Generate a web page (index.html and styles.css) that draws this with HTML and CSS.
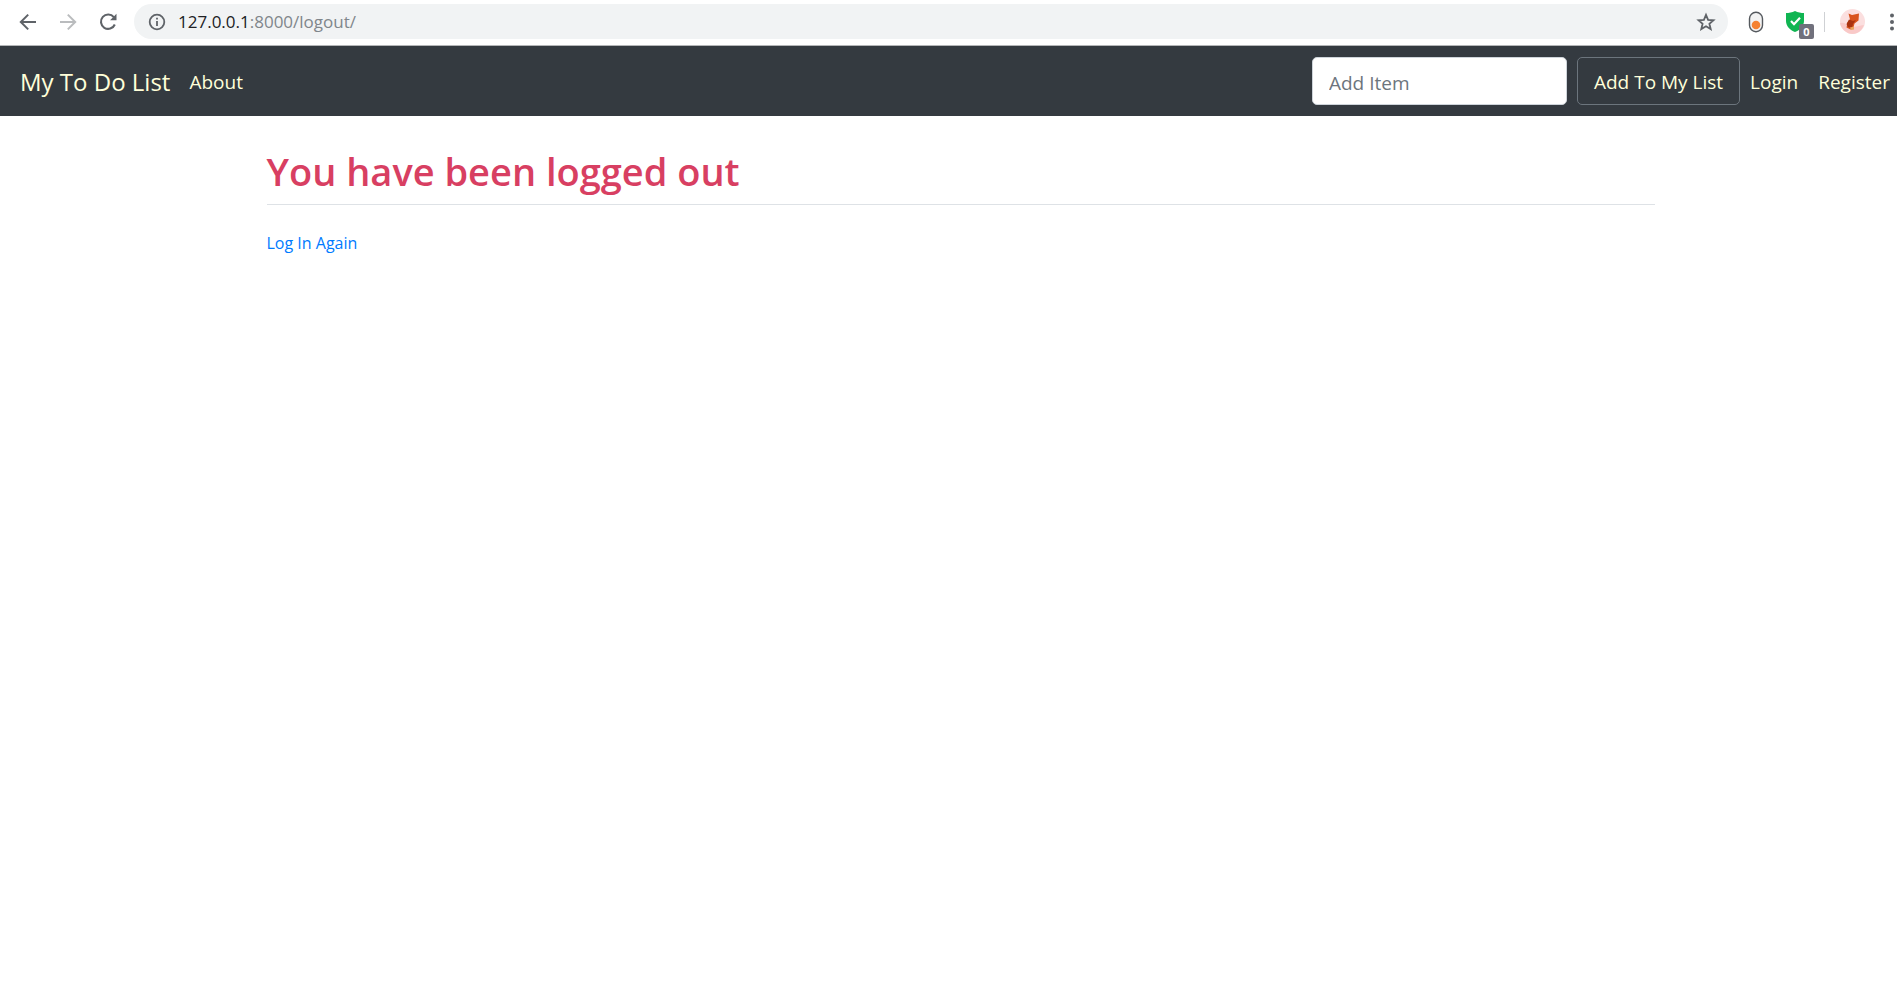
FILE: index.html
```html
<!DOCTYPE html>
<html lang="en">
<head>
<meta charset="utf-8">
<title>My To Do List</title>
<link rel="stylesheet" href="styles.css">
</head>
<body>
<div class="toolbar">
  <div class="history">
    <button class="icon-button" aria-label="Back"><svg width="18" height="18" viewBox="0 0 18 18" fill="none" stroke="#5f6368" stroke-width="2"><path d="M17 9H2.400M9.200 1.600 1.800 9l7.400 7.400"/></svg></button>
    <button class="icon-button" aria-label="Forward"><svg width="18" height="18" viewBox="0 0 18 18" fill="none" stroke="#babcbe" stroke-width="2"><path d="M1 9h14.600M8.800 1.600 16.200 9l-7.400 7.400"/></svg></button>
    <button class="icon-button" aria-label="Reload"><svg width="18" height="18" viewBox="0 0 18 18"><path d="M14.800 4.200A7.200 7.200 0 1 0 15.800 11.500" fill="none" stroke="#5f6368" stroke-width="2.100"/><path d="M17.500.8v6.400h-6.400z" fill="#5f6368"/></svg></button>
  </div>
  <div class="address">
    <svg width="18" height="18" viewBox="0 0 18 18"><circle cx="9" cy="9" r="7.300" fill="none" stroke="#5f6368" stroke-width="1.800"/><path d="M8.100 4.700h1.800v1.800H8.100zM8.100 8h1.800v5H8.100z" fill="#5f6368"/></svg>
    <span class="url"><span class="host">127.0.0.1</span>:8000/logout/</span>
    <button class="icon-button" aria-label="Bookmark"><svg width="20" height="20" viewBox="0 0 20 20" fill="none" stroke="#5f6368" stroke-width="1.800"><path d="m10 2.800 2.100 5 5.400.5-4.100 3.500 1.300 5.300L10 14.200l-4.700 2.900 1.300-5.300-4.100-3.500 5.400-.5z"/></svg></button>
  </div>
  <div class="extensions">
    <svg width="16" height="22" viewBox="0 0 16 22"><rect x="1.500" y="1.300" width="13" height="19.400" rx="6.400" fill="#f3f3f3" stroke="#55595e" stroke-width="1.400"/><circle cx="8" cy="14" r="4.300" fill="#f58232"/></svg>
    <div class="shield">
      <svg width="18" height="21" viewBox="0 0 18 21"><path d="M9 0c3 1.500 6 2 9 2v8c0 5-4 9-9 11-5-2-9-6-9-11V2c3 0 6-.5 9-2z" fill="#10b552"/><path d="m5 10 3 3.200 6-6.400" fill="none" stroke="#fff" stroke-width="2.200"/></svg>
      <span class="count">0</span>
    </div>
  </div>
  <div class="profile">
    <svg width="25" height="25" viewBox="0 0 25 25"><circle cx="12.500" cy="12.500" r="12.500" fill="#fbdfdf"/><path d="M0 14c4-1 6 1 9 3s9 0 15-1c-2 5-6 9-11.500 9S1 20 0 14z" fill="#f9c9c8"/><path d="M8.500 4.500 12 6l7-1.500-.5 7-4 3-1 4-3 2-4-2 1-5 2.500-3z" fill="#d9541e"/><path d="m9 10.500 4 1.500 3-1-3 4-1 4-4-1-1.500-3z" fill="#a93310"/><path d="m10 18.500 4-1v3l-3 .5z" fill="#e9a35b"/></svg>
    <button class="icon-button" aria-label="Menu"><svg width="6" height="18" viewBox="0 0 6 18" fill="#5f6368"><circle cx="3" cy="2.500" r="2"/><circle cx="3" cy="9" r="2"/><circle cx="3" cy="15.500" r="2"/></svg></button>
  </div>
</div>
<nav class="navbar">
  <a class="brand" href="#">My To Do List</a>
  <a class="nav-link" href="#">About</a>
  <form class="add-form">
    <input class="item-input" type="text" placeholder="Add Item" aria-label="Add Item">
    <button class="add-button" type="button">Add To My List</button>
  </form>
  <a class="nav-link" href="#">Login</a>
  <a class="nav-link register" href="#">Register</a>
</nav>
<main class="content">
  <h1 class="title">You have been logged out</h1>
  <a class="again" href="#">Log In Again</a>
</main>
</body>
</html>
```
FILE: styles.css
```css
* { box-sizing: border-box; }
body { margin: 0; background: #fff; font-family: "Open Sans", "Noto Sans", sans-serif; }
a { text-decoration: none; }
svg { display: block; flex: none; }
.icon-button { display: block; padding: 0; border: 0; background: none; }

.toolbar { display: flex; align-items: center; height: 46px; padding: 0 2px 2px 19px; border-bottom: 1px solid #b4b6b8; overflow: hidden; }
.history { display: flex; gap: 22px; margin-right: 17px; }
.address { display: flex; flex: 1; align-items: center; height: 35px; padding: 0 12px 0 14px; border-radius: 18px; background: #f1f3f4; }
.url { flex: 1; margin-left: 12px; color: #80868b; font-size: 17px; line-height: 24px; }
.host { color: #202124; }
.extensions { display: flex; align-items: center; gap: 22px; height: 20px; padding: 0 10px 0 20px; margin-right: 15px; border-right: 1px solid #cfd1d4; }
.shield { position: relative; padding-right: 10px; }
.count { position: absolute; right: 0; top: 13px; width: 15px; height: 15px; border-radius: 2px; background: #70707c; color: #fff; font-size: 11px; font-weight: 700; line-height: 15px; text-align: center; }
.profile { display: flex; align-items: center; gap: 24px; }

.navbar { display: flex; align-items: center; height: 70px; padding: 0 7px 0 20px; background: #343a40; }
.brand { margin-right: 19px; padding-top: 2px; color: #ffffd9; font-size: 24px; line-height: 36px; }
.nav-link { padding-top: 2px; color: #ffffd9; font-size: 19px; line-height: 30px; }
.register { margin-left: 20px; }
.add-form { display: flex; gap: 10px; margin: 0 10px 0 auto; }
.item-input { width: 255px; height: 48px; padding: 4px 16px 0; border: 1px solid #ced4da; border-radius: 5px; background: #fff; font: 19px "Open Sans", "Noto Sans", sans-serif; }
.item-input::placeholder { color: #6c757d; opacity: 1; }
.add-button { height: 48px; padding: 2px 16px 0; border: 1px solid #6c757d; border-radius: 5px; background: none; color: #ffffd9; font: 19px "Open Sans", "Noto Sans", sans-serif; }

.content { max-width: 1436px; margin: 0 auto; padding: 31px 12px 0 36px; }
.title { margin: 0 0 24px; padding-bottom: 9px; border-bottom: 1px solid #dee2e6; color: #d83f62; font-size: 38px; font-weight: 600; line-height: 48px; }
.again { color: #007bff; font-size: 16px; line-height: 28px; }
```
